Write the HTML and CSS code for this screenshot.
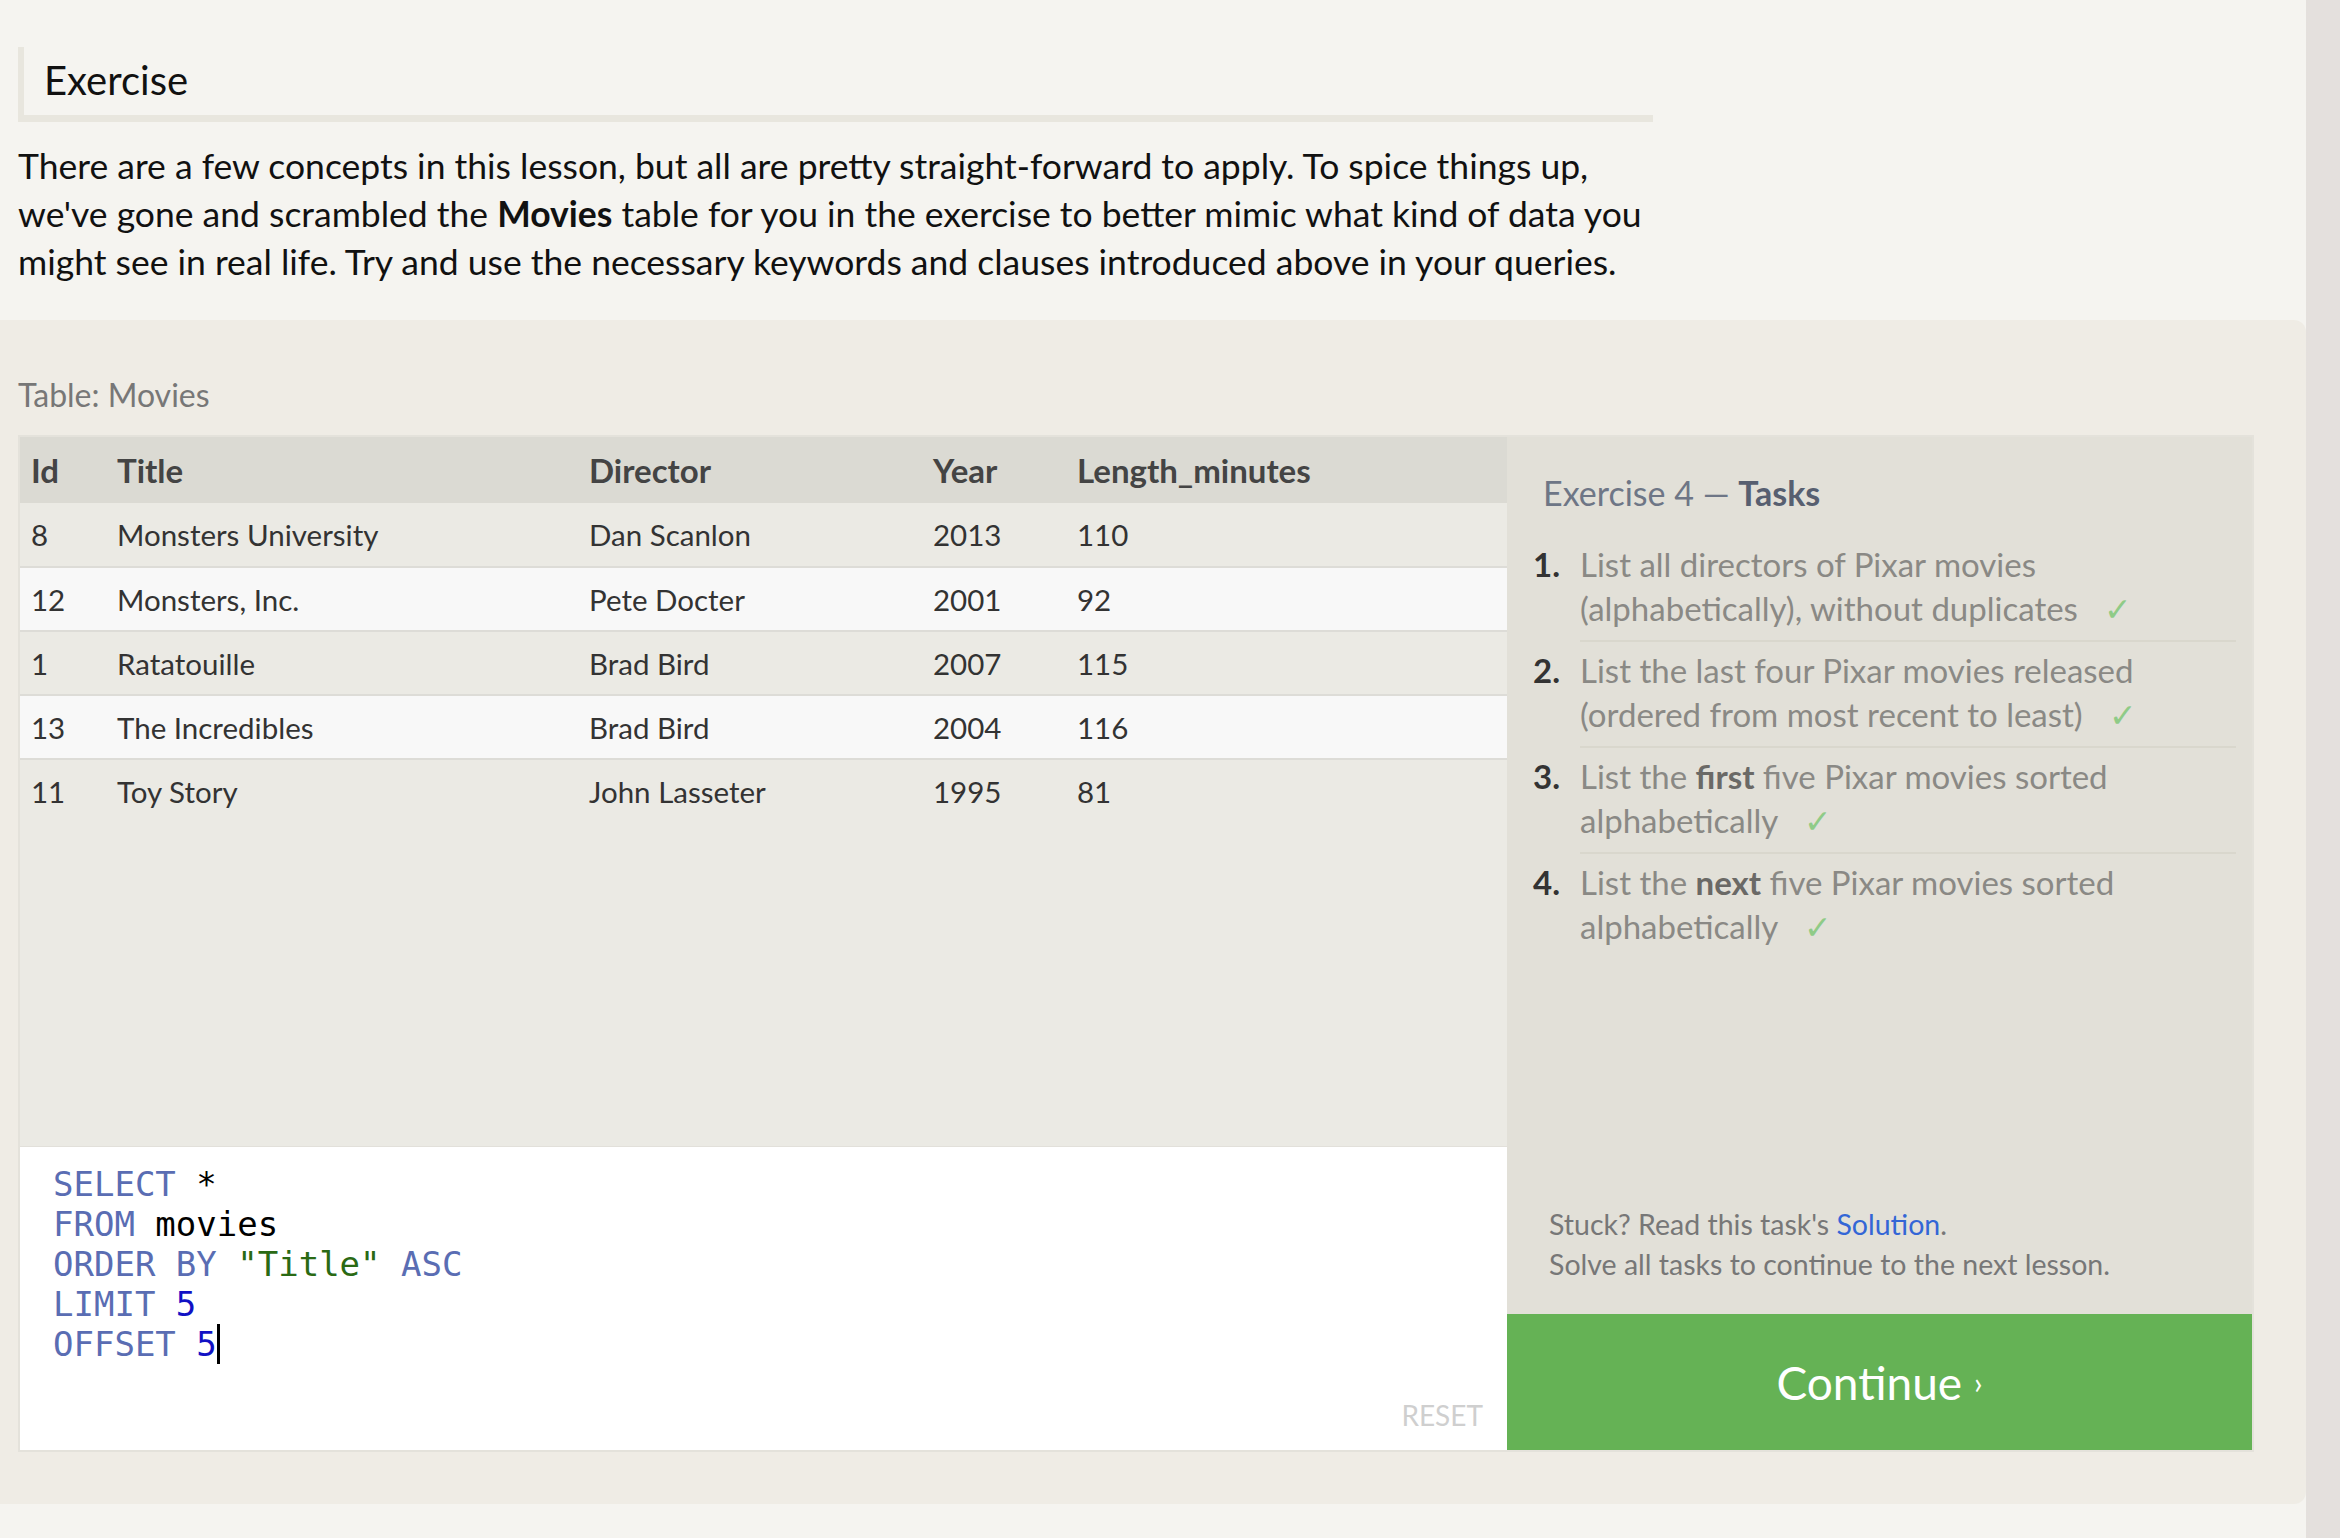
FILE: index.html
```html
<!DOCTYPE html>
<html lang="en">
<head>
<meta charset="utf-8">
<title>SQL Lesson – Exercise</title>
<link rel="stylesheet" href="styles.css">
</head>
<body>
<div class="page">
  <main class="main">
    <section class="lesson">
      <h2 class="lesson-title">Exercise</h2>
      <p class="lesson-text">There are a few concepts in this lesson, but all are pretty straight-forward to apply. To spice things up,<br>we've gone and scrambled the <b>Movies</b> table for you in the exercise to better mimic what kind of data you<br>might see in real life. Try and use the necessary keywords and clauses introduced above in your queries.</p>
    </section>

    <section class="exercise">
      <div class="table-label">Table: Movies</div>
      <div class="frame">
        <div class="left">
          <table class="movies">
            <colgroup>
              <col class="c-id"><col class="c-title"><col class="c-dir"><col class="c-year"><col class="c-len">
            </colgroup>
            <thead>
              <tr><th>Id</th><th>Title</th><th>Director</th><th>Year</th><th>Length_minutes</th></tr>
            </thead>
            <tbody>
              <tr><td>8</td><td>Monsters University</td><td>Dan Scanlon</td><td>2013</td><td>110</td></tr>
              <tr><td>12</td><td>Monsters, Inc.</td><td>Pete Docter</td><td>2001</td><td>92</td></tr>
              <tr><td>1</td><td>Ratatouille</td><td>Brad Bird</td><td>2007</td><td>115</td></tr>
              <tr><td>13</td><td>The Incredibles</td><td>Brad Bird</td><td>2004</td><td>116</td></tr>
              <tr><td>11</td><td>Toy Story</td><td>John Lasseter</td><td>1995</td><td>81</td></tr>
            </tbody>
          </table>
          <div class="filler"></div>
          <div class="editor">
            <pre class="code"><span class="kw">SELECT</span> *
<span class="kw">FROM</span> movies
<span class="kw">ORDER BY</span> <span class="str">"Title"</span> <span class="kw">ASC</span>
<span class="kw">LIMIT</span> <span class="num">5</span>
<span class="kw">OFFSET</span> <span class="num">5</span><span class="cursor"></span></pre>
            <div class="editor-foot"><span class="reset">RESET</span></div>
          </div>
        </div>

        <aside class="tasks">
          <div class="tasks-body">
            <h3 class="tasks-title">Exercise 4 — <b>Tasks</b></h3>
            <ol class="task-list">
              <li class="task"><span class="task-num">1.</span><span class="task-text">List all directors of Pixar movies<br>(alphabetically), without duplicates <span class="check">✓</span></span></li>
              <li class="task"><span class="task-num">2.</span><span class="task-text">List the last four Pixar movies released<br>(ordered from most recent to least) <span class="check">✓</span></span></li>
              <li class="task"><span class="task-num">3.</span><span class="task-text">List the <b>first</b> five Pixar movies sorted<br>alphabetically <span class="check">✓</span></span></li>
              <li class="task"><span class="task-num">4.</span><span class="task-text">List the <b>next</b> five Pixar movies sorted<br>alphabetically <span class="check">✓</span></span></li>
            </ol>
          </div>
          <div class="stuck">
            <p>Stuck? Read this task's <a href="#" class="solution">Solution</a>.</p>
            <p>Solve all tasks to continue to the next lesson.</p>
          </div>
          <a href="#" class="continue">Continue <span class="chev">›</span></a>
        </aside>
      </div>
    </section>
  </main>
  <div class="scrollbar"></div>
</div>
</body>
</html>
```

FILE: styles.css
```css
* { box-sizing: border-box; }

html, body {
  margin: 0;
  padding: 0;
}

body {
  background: #f5f4f0;
  font-family: Lato, "Open Sans", sans-serif;
  color: #111;
}

.page {
  display: flex;
  min-height: 1538px;
}

.main {
  flex: 1;
  min-width: 0;
}

.scrollbar {
  width: 34px;
  flex-shrink: 0;
  background: #e4e0dd;
}

/* ---------- lesson intro ---------- */
.lesson {
  padding: 47px 0 34px 18px;
}

.lesson-title {
  margin: 0;
  width: 1635px;
  height: 75px;
  padding-left: 20px;
  border-left: 6px solid #e8e6de;
  border-bottom: 7px solid #e8e6de;
  font-size: 40px;
  font-weight: normal;
  line-height: 66px;
  color: #111;
}

.lesson-text {
  margin: 20px 0 0;
  font-size: 35.5px;
  line-height: 48px;
  color: #111;
}

/* ---------- exercise ---------- */
.exercise {
  background: #efece5;
  border-radius: 0 12px 12px 0;
  padding: 55px 0 52px 18px;
}

.table-label {
  font-size: 32px;
  line-height: 40px;
  color: #777;
  margin-bottom: 20px;
}

.frame {
  display: flex;
  width: 2236px;
  height: 1017px;
  border: 2px solid #e4e2db;
}

.left {
  width: 1487px;
  display: flex;
  flex-direction: column;
  background: #ebeae4;
}

.movies {
  width: 100%;
  table-layout: fixed;
  border-collapse: collapse;
  font-size: 29.5px;
}

.c-id { width: 86px; }
.c-title { width: 472px; }
.c-dir { width: 344px; }
.c-year { width: 144px; }

.movies th,
.movies td {
  text-align: left;
  padding: 0 0 0 11px;
  white-space: nowrap;
}

.movies th {
  height: 66px;
  background: #dbdad3;
  color: #444;
  font-weight: bold;
  font-size: 33px;
}

.movies td {
  height: 64px;
  color: #333;
  border-bottom: 2px solid #dddcd7;
}

.movies tbody tr:nth-child(odd) td { background: #ebeae4; }
.movies tbody tr:nth-child(even) td { background: #f8f8f8; }
.movies tbody tr:last-child td { border-bottom: none; }

.filler { flex: 1; }

.editor {
  height: 304px;
  background: #fff;
  border-top: 1px solid #e2e0da;
  display: flex;
  flex-direction: column;
  padding: 17px 24px 20px 33px;
}

.code {
  margin: 0;
  flex: 1;
  font-family: "DejaVu Sans Mono", monospace;
  font-size: 34px;
  line-height: 40px;
  color: #000;
}

.kw { color: #5a6db3; }
.str { color: #2a6a14; }
.num { color: #1111c4; }

.cursor {
  display: inline-block;
  width: 3px;
  height: 40px;
  background: #000;
  vertical-align: top;
}

.editor-foot {
  display: flex;
  justify-content: flex-end;
}

.reset {
  font-size: 28px;
  line-height: 30px;
  color: #cfcfcf;
}

/* ---------- tasks ---------- */
.tasks {
  flex: 1;
  display: flex;
  flex-direction: column;
  background: #e2e0d8;
}

.tasks-body {
  flex: 1;
  padding: 36px 16px 0 26px;
}

.tasks-title {
  margin: 0 0 23px 10px;
  font-size: 34px;
  line-height: 40px;
  font-weight: normal;
  color: #6e7686;
}

.tasks-title b { color: #575f70; }

.task-list {
  list-style: none;
  margin: 0;
  padding: 0;
}

.task {
  display: flex;
  font-size: 33px;
  line-height: 44px;
}

.task-num {
  width: 47px;
  flex-shrink: 0;
  padding-top: 6px;
  font-weight: bold;
  color: #333;
}

.task-text {
  flex: 1;
  padding: 6px 0 10px;
  border-bottom: 2px solid #d9d7cd;
  color: #8a8985;
}

.task:last-child .task-text { border-bottom: none; }

.task-text b { color: #6a6966; }

.check {
  color: #8fcb87;
  margin-left: 18px;
}

.stuck {
  padding: 0 0 30px 42px;
  font-size: 28.5px;
  line-height: 40px;
  color: #777;
}

.stuck p { margin: 0; }

.solution {
  color: #3366d6;
  text-decoration: none;
}

.continue {
  display: flex;
  align-items: center;
  justify-content: center;
  height: 136px;
  background: #65b255;
  color: #fff;
  font-size: 46px;
  text-decoration: none;
}

.chev {
  font-size: 30px;
  margin-left: 12px;
}
```
